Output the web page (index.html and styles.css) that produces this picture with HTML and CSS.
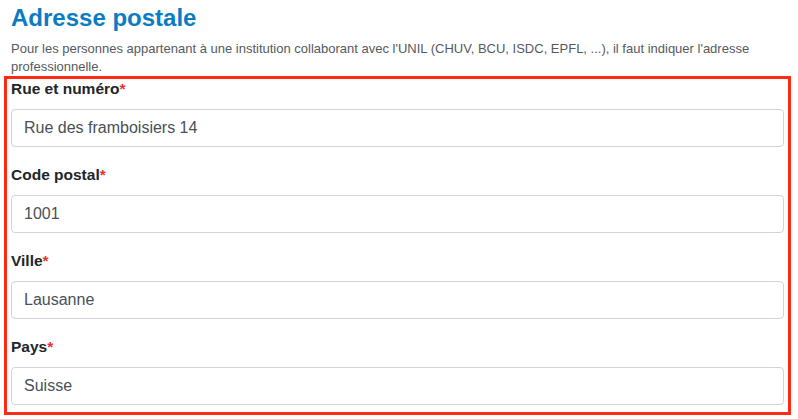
FILE: index.html
```html
<!DOCTYPE html>
<html lang="fr">
<head>
<meta charset="utf-8">
<title>Adresse postale</title>
<link rel="stylesheet" href="styles.css">
</head>
<body>
<div class="page">
  <div class="intro">
    <h2 class="title">Adresse postale</h2>
    <p class="desc">Pour les personnes appartenant à une institution collaborant avec l'UNIL (CHUV, BCU, ISDC, EPFL, ...), il faut indiquer l'adresse professionnelle.</p>
  </div>
  <form class="address-form">
    <div class="field">
      <label class="field-label" for="rue">Rue et numéro<span class="req">*</span></label>
      <input class="field-input" id="rue" type="text" value="Rue des framboisiers 14">
    </div>
    <div class="field">
      <label class="field-label" for="npa">Code postal<span class="req">*</span></label>
      <input class="field-input" id="npa" type="text" value="1001">
    </div>
    <div class="field">
      <label class="field-label" for="ville">Ville<span class="req">*</span></label>
      <input class="field-input" id="ville" type="text" value="Lausanne">
    </div>
    <div class="field">
      <label class="field-label" for="pays">Pays<span class="req">*</span></label>
      <input class="field-input" id="pays" type="text" value="Suisse">
    </div>
  </form>
</div>
</body>
</html>
```

FILE: styles.css
```css
html, body {
  margin: 0;
  padding: 0;
  background: #ffffff;
}

body {
  font-family: "Liberation Sans", Arial, Helvetica, sans-serif;
  color: #212529;
}

.page {
  padding: 0 7px 0 4px;
}

.intro {
  padding: 0 7px;
}

.title {
  margin: 3px 0 0;
  font-size: 24px;
  line-height: 29px;
  font-weight: bold;
  color: #0a7cc4;
}

.desc {
  margin: 8px 0 0;
  font-size: 13px;
  line-height: 18px;
  color: #555a60;
}

.address-form {
  margin: 0;
  padding: 0 4px 7px;
  border: 3px solid #ff2a12;
  display: flex;
  flex-direction: column;
  gap: 18px;
}

.field {
  display: flex;
  flex-direction: column;
}

.field-label {
  font-size: 15.5px;
  line-height: 20px;
  font-weight: bold;
  color: #212529;
  margin-bottom: 10px;
}

.req {
  color: #e3342f;
}

.field-input {
  box-sizing: border-box;
  height: 38px;
  margin: 0;
  padding: 6px 12px;
  font-family: "Liberation Sans", Arial, Helvetica, sans-serif;
  font-size: 16px;
  line-height: 24px;
  color: #495057;
  background: #ffffff;
  border: 1px solid #ced4da;
  border-radius: 4px;
  outline: none;
}
```
